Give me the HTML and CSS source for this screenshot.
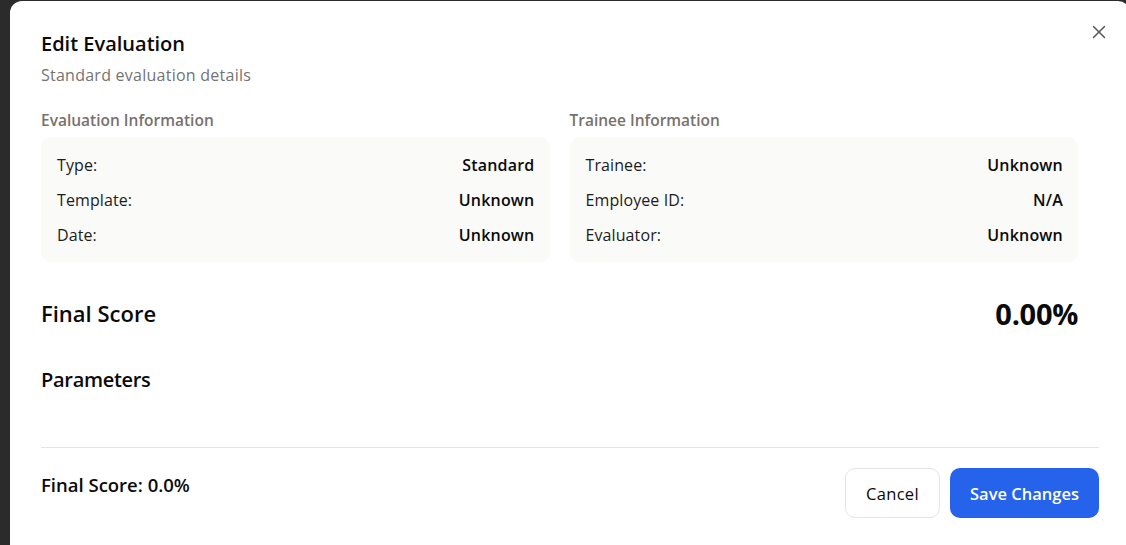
FILE: index.html
```html
<!DOCTYPE html>
<html>
<head>
<meta charset="utf-8">
<link rel="stylesheet" href="styles.css">
</head>
<body>
<div class="modal">
  <button class="close" aria-label="Close">
    <svg width="22" height="22" viewBox="0 0 24 24" fill="none" stroke="currentColor" stroke-width="1.6" stroke-linecap="round" stroke-linejoin="round"><path d="M18 6 6 18"/><path d="m6 6 12 12"/></svg>
  </button>
  <div class="scroll">
    <h2 class="title">Edit Evaluation</h2>
    <p class="subtitle">Standard evaluation details</p>
    <div class="info-grid">
      <section class="info">
        <h3 class="info-heading">Evaluation Information</h3>
        <div class="card">
          <div class="row"><span class="label">Type:</span><span class="value">Standard</span></div>
          <div class="row"><span class="label">Template:</span><span class="value">Unknown</span></div>
          <div class="row"><span class="label">Date:</span><span class="value">Unknown</span></div>
        </div>
      </section>
      <section class="info">
        <h3 class="info-heading">Trainee Information</h3>
        <div class="card">
          <div class="row"><span class="label">Trainee:</span><span class="value">Unknown</span></div>
          <div class="row"><span class="label">Employee ID:</span><span class="value">N/A</span></div>
          <div class="row"><span class="label">Evaluator:</span><span class="value">Unknown</span></div>
        </div>
      </section>
    </div>
    <div class="score-row">
      <h3 class="score-label">Final Score</h3>
      <span class="score-value">0.00%</span>
    </div>
    <h3 class="params">Parameters</h3>
  </div>
  <div class="footer">
    <span class="footer-score">Final Score: 0.0%</span>
    <div class="actions">
      <button class="btn btn-outline">Cancel</button>
      <button class="btn btn-primary">Save Changes</button>
    </div>
  </div>
</div>
</body>
</html>
```
FILE: styles.css
```css
* { box-sizing: border-box; }
html, body { margin: 0; height: 100%; }
body {
  background: #2b2b2b;
  overflow: hidden;
  padding: 1px 0 0 10px;
  font-family: "Open Sans", "Noto Sans", sans-serif;
  color: #0a0a0a;
}
.modal {
  position: relative;
  width: 1120px;
  height: 560px;
  background: #fff;
  border-radius: 12px;
  padding: 29px 0 0 31px;
}
.close {
  position: absolute;
  top: 20px;
  left: 1078px;
  width: 22px;
  height: 22px;
  padding: 0;
  border: 0;
  background: none;
  color: #555;
  display: flex;
  align-items: center;
  justify-content: center;
}
.scroll {
  width: 1058px;
  padding-right: 21px;
  height: 417px;
}
.title {
  margin: 0 0 5px;
  font-size: 20px;
  line-height: 28px;
  font-weight: 600;
}
.subtitle {
  margin: 0;
  font-size: 16px;
  line-height: 24px;
  color: #737373;
  letter-spacing: 0.25px;
}
.info-grid {
  margin-top: 21px;
  display: grid;
  grid-template-columns: 1fr 1fr;
  gap: 20px;
}
.info-heading {
  margin: 0 0 5px;
  font-size: 15.5px;
  line-height: 24px;
  font-weight: 600;
  color: #78716c;
}
.card {
  background: #fafaf9;
  border-radius: 10px;
  padding: 16px 15px 15px 16px;
  display: flex;
  flex-direction: column;
  gap: 11px;
}
.row {
  display: flex;
  justify-content: space-between;
  font-size: 16px;
  line-height: 24px;
}
.label { color: #1c1c1c; letter-spacing: 0.1px; }
.value { font-weight: 600; color: #0a0a0a; letter-spacing: 0.2px; }
.score-row {
  margin-top: 33px;
  display: flex;
  justify-content: space-between;
  align-items: center;
  height: 36px;
}
.score-label {
  margin: 0;
  font-size: 22px;
  font-weight: 600;
}
.score-value {
  font-size: 29px;
  font-weight: 700;
  letter-spacing: -0.3px;
}
.params {
  margin: 35px 0 0;
  font-size: 20px;
  line-height: 28px;
  font-weight: 600;
  letter-spacing: -0.3px;
}
.footer {
  width: 1058px;
  border-top: 1px solid #e5e5e5;
  padding-top: 20px;
  display: flex;
  justify-content: space-between;
  align-items: flex-start;
}
.footer-score {
  margin-top: 3px;
  font-size: 18.5px;
  line-height: 28px;
  font-weight: 600;
}
.actions {
  display: flex;
  gap: 10px;
}
.btn {
  height: 50px;
  border-radius: 10px;
  font-family: inherit;
  font-size: 16.5px;
  font-weight: 600;
}
.btn-outline {
  width: 95px;
  background: #fff;
  border: 1px solid #e5e5e5;
  color: #0a0a0a;
  font-weight: 500;
  letter-spacing: 0.3px;
}
.btn-primary {
  width: 149px;
  background: #2563eb;
  border: 0;
  color: #fff;
}
```
